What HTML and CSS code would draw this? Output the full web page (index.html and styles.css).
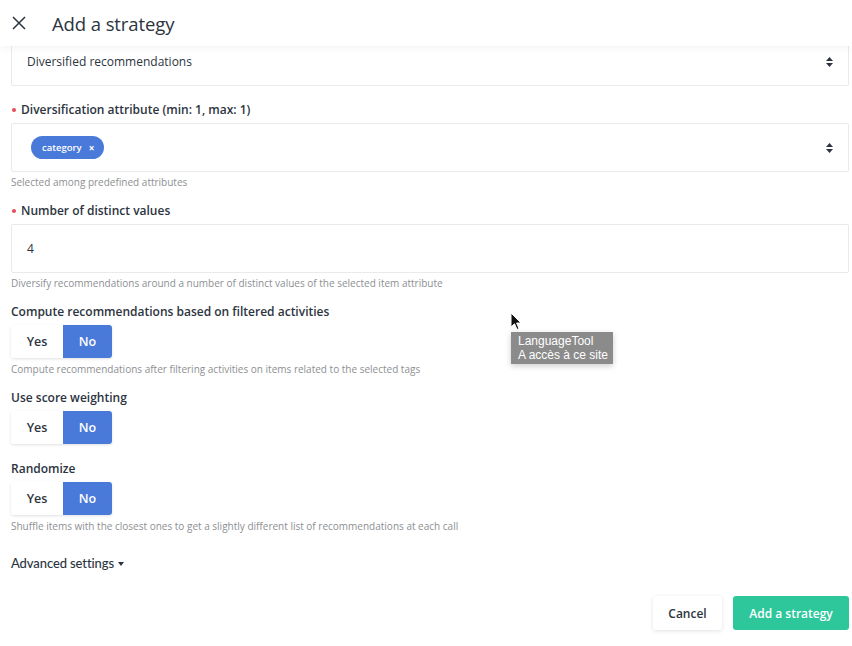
FILE: index.html
```html
<!DOCTYPE html>
<html>
<head>
<meta charset="utf-8">
<link rel="stylesheet" href="styles.css">
</head>
<body>
<div class="page">
  <header class="header">
    <svg class="close" width="14" height="14" viewBox="0 0 14 14"><path d="M1 1L13 13M13 1L1 13" stroke="#2c3440" stroke-width="1.5" fill="none"/></svg>
    <h1 class="title">Add a strategy</h1>
  </header>
  <main class="main">
    <div class="box box-first">
      <span class="box-text">Diversified recommendations</span>
      <svg class="arrows" width="7" height="10" viewBox="0 0 7 10"><path d="M3.5 0L7 4H0Z M3.5 10L7 6H0Z" fill="#2c3440"/></svg>
    </div>

    <div class="field">
      <div class="label req">Diversification attribute (min: 1, max: 1)</div>
      <div class="box">
        <span class="chip">category <span class="chip-x">×</span></span>
        <svg class="arrows" width="7" height="10" viewBox="0 0 7 10"><path d="M3.5 0L7 4H0Z M3.5 10L7 6H0Z" fill="#2c3440"/></svg>
      </div>
      <div class="help">Selected among predefined attributes</div>
    </div>

    <div class="field">
      <div class="label req">Number of distinct values</div>
      <div class="box"><span class="box-text">4</span></div>
      <div class="help">Diversify recommendations around a number of distinct values of the selected item attribute</div>
    </div>

    <div class="field">
      <div class="label">Compute recommendations based on filtered activities</div>
      <div class="toggle"><span class="opt">Yes</span><span class="opt on">No</span></div>
      <div class="help help-t">Compute recommendations after filtering activities on items related to the selected tags</div>
    </div>

    <div class="field nohelp">
      <div class="label">Use score weighting</div>
      <div class="toggle"><span class="opt">Yes</span><span class="opt on">No</span></div>
    </div>

    <div class="field">
      <div class="label">Randomize</div>
      <div class="toggle"><span class="opt">Yes</span><span class="opt on">No</span></div>
      <div class="help help-t">Shuffle items with the closest ones to get a slightly different list of recommendations at each call</div>
    </div>

    <div class="advanced">Advanced settings <svg class="caret" width="6" height="4" viewBox="0 0 6 4"><path d="M0 0H6L3 4Z" fill="#2c3440"/></svg></div>
  </main>
  <footer class="footer">
    <button class="btn btn-cancel">Cancel</button>
    <button class="btn btn-primary">Add a strategy</button>
  </footer>

  <svg class="cursor" width="12" height="19" viewBox="0 0 12 19"><path d="M1 1L1 15L4.5 11.8L7 17.5L9 16.6L6.6 11H11Z" fill="#111" stroke="#fff" stroke-width="1"/></svg>
  <div class="tooltip">LanguageTool<br>A accès à ce site</div>
</div>
</body>
</html>
```
FILE: styles.css
```css
* { box-sizing: border-box; }
html, body { margin: 0; padding: 0; background: #fff; }
body {
  font-family: "Open Sans", "Noto Sans", sans-serif;
  color: #2c3440;
  width: 852px;
  height: 646px;
  overflow: hidden;
}
.page {
  position: relative;
  width: 852px;
  height: 646px;
  display: flex;
  flex-direction: column;
}
.header {
  position: relative;
  z-index: 2;
  height: 46px;
  flex: none;
  display: flex;
  align-items: center;
  padding-left: 12px;
  background: #fff;
  box-shadow: 0 2px 8px rgba(0,0,0,0.05);
}
.close { margin-right: 26px; }
.title {
  margin: 0;
  font-size: 18.5px;
  font-weight: 400;
  color: #2c3440;
  letter-spacing: -0.1px;
}
.main {
  flex: none;
  height: 532px;
  overflow: hidden;
  padding: 0 3px 0 11px;
}
.box {
  height: 49px;
  border: 1px solid #e9e9ee;
  border-radius: 2px;
  display: flex;
  align-items: center;
  padding: 0 15px 0 15px;
  position: relative;
}
.box-first { margin-top: -9px; }
.box-text { font-size: 12px; color: #2c3440; flex: 1; }
.arrows { margin-left: auto; }
.field { margin-top: 15px; }
.field + .field { margin-top: 13px; }
.field.nohelp { padding-bottom: 3px; }
.label {
  height: 18px;
  line-height: 18px;
  font-size: 12px;
  font-weight: 600;
  margin-bottom: 4px;
  position: relative;
}
.field:first-of-type .label { }
.label.req { padding-left: 10px; }
.label.req::before {
  content: "";
  position: absolute;
  left: 1px;
  top: 7px;
  width: 4px;
  height: 4px;
  border-radius: 50%;
  background: #e94a5a;
}
.chip {
  display: inline-flex;
  align-items: center;
  height: 23px;
  padding: 0 10px 0 11px;
  border-radius: 12px;
  background: #4a7ad9;
  color: #fff;
  font-size: 9.5px;
  font-weight: 600;
  margin-left: 4px;
}
.chip-x { margin-left: 7px; font-size: 10px; font-weight: 700; }
.help {
  margin-top: 3px;
  height: 14px;
  line-height: 14px;
  font-size: 10px;
  color: #8d8f93;
}
.help-t { margin-top: 4px; }
.toggle {
  display: flex;
  width: 101px;
  height: 33px;
  margin-top: 4px;
  border-radius: 3px;
  box-shadow: 0 1px 3px rgba(0,0,0,0.12);
  overflow: hidden;
}
.opt {
  display: flex;
  align-items: center;
  justify-content: center;
  font-size: 12.5px;
  font-weight: 600;
  width: 52px;
  background: #fff;
  color: #2c3440;
}
.opt.on { width: 49px; background: #4a7ad9; color: #fff; }
.advanced {
  margin-top: 21px;
  height: 18px;
  line-height: 18px;
  font-family: "Lato", sans-serif;
  font-size: 13px;
  font-weight: 500;
  color: #2c3440;
  letter-spacing: -0.1px;
}
.caret { margin-left: 1px; vertical-align: 2px; }
.footer {
  flex: none;
  display: flex;
  justify-content: flex-end;
  gap: 11px;
  padding: 18px 3px 0 0;
}
.btn {
  height: 34px;
  border: none;
  border-radius: 3px;
  font-family: "Open Sans", sans-serif;
  font-size: 12px;
  font-weight: 600;
  padding: 0;
}
.btn-cancel {
  width: 69px;
  background: #fff;
  color: #2c3440;
  box-shadow: 0 1px 4px rgba(0,0,0,0.12);
}
.btn-primary {
  width: 116px;
  background: #2ec79b;
  color: #fff;
}
.cursor {
  position: absolute;
  left: 510px;
  top: 312px;
  z-index: 5;
}
.tooltip {
  position: absolute;
  left: 511px;
  top: 332px;
  width: 102px;
  height: 32px;
  padding: 2px 0 0 7px;
  background: #8b8b8b;
  color: #fff;
  font-family: "Liberation Sans", Arial, sans-serif;
  font-size: 12px;
  line-height: 14px;
  box-shadow: 0 2px 6px rgba(0,0,0,0.2);
  z-index: 4;
}
```
